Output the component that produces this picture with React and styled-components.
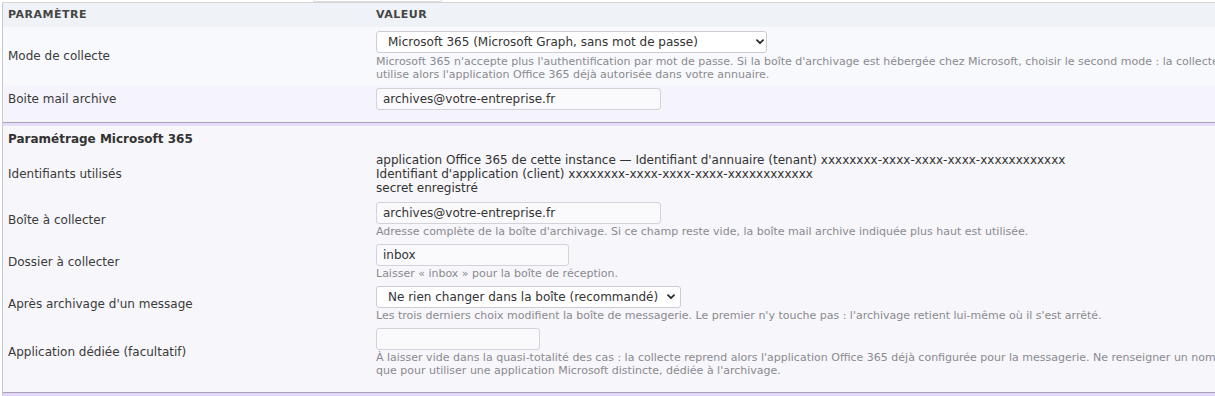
import React from 'react';
import styled, { createGlobalStyle } from 'styled-components';

const Global = createGlobalStyle`
    html, body {
        margin: 0;
        padding: 0;
        background: #ffffff;
        overflow: hidden;
    }
    body {
        font-family: "DejaVu Sans", "Liberation Sans", sans-serif;
        font-size: 12px;
        color: #333333;
    }
`;

const Page = styled.div`
    padding: 0 0 0 2px;
`;

const TabStub = styled.div`
    margin-left: 311px;
    width: 127px;
    height: 1px;
    background: #ffffff;
    border: 1px solid #d9d9de;
    border-top: none;
    border-radius: 0 0 3px 3px;
`;

const Table = styled.div`
    width: 1260px;
    border-top: 1px solid #d3d3d8;
    border-left: 1px solid #c9c9cf;
`;

const Row = styled.div`
    display: grid;
    grid-template-columns: 367px 1fr;
    align-items: center;
    background: ${p => p.$bg || '#f7f6fa'};
`;

const HeadCell = styled.div`
    height: 24px;
    line-height: 24px;
    padding: 0 5px;
    font-size: 11px;
    font-weight: bold;
    letter-spacing: 0.5px;
    text-transform: uppercase;
    color: #454545;
    &:last-child {
        padding-left: 6px;
    }
`;

const Label = styled.div`
    padding: 0 5px;
    line-height: 15px;
    color: #3a3a3a;
`;

const Value = styled.div`
    padding: ${p => p.$pad || '3px 6px 3px'};
    line-height: 14px;
    color: #333333;
`;

const Help = styled.div`
    margin-top: ${p => p.$gap || 1}px;
    font-size: 11px;
    line-height: 13px;
    color: #8a8a90;
`;

const Separator = styled.div`
    padding-top: ${p => p.$gap || 8}px;
    background: ${p => p.$bg || '#f7f6fa'};
    &::after {
        content: '';
        display: block;
        height: 3px;
        border-top: 1px solid #a6a1b6;
        background: ${p => p.$band || '#e6def9'};
    }
`;

const SectionTitle = styled.div`
    padding: 6px 5px 3px;
    line-height: 15px;
    font-weight: bold;
    color: #333333;
    background: #f7f6fa;
`;

const SelectWrap = styled.div`
    position: relative;
    width: ${p => p.$w}px;
    height: 22px;
`;

const Select = styled.select`
    appearance: none;
    -webkit-appearance: none;
    display: block;
    box-sizing: border-box;
    width: 100%;
    height: 22px;
    margin: 0;
    padding: 0 20px 0 11px;
    border: 1px solid #cdccd4;
    border-radius: 3px;
    background: #ffffff;
    font-family: "DejaVu Sans", "Liberation Sans", sans-serif;
    font-size: 12px;
    color: #333333;
    outline: none;
`;

const Chevron = styled.svg`
    position: absolute;
    right: ${p => p.$right || 4}px;
    top: 8px;
    width: 8px;
    height: 6px;
    pointer-events: none;
`;

const Input = styled.input`
    display: block;
    box-sizing: border-box;
    width: ${p => p.$w}px;
    height: 22px;
    margin: 0;
    padding: 0 6px;
    border: 1px solid #d3d2da;
    border-radius: 3px;
    background: #fafafc;
    font-family: "DejaVu Sans", "Liberation Sans", sans-serif;
    font-size: 12px;
    color: #333333;
    outline: none;
`;

function Dropdown({ width, right, value, options }) {
    return (
        <SelectWrap $w={width}>
            <Select defaultValue={value}>
                {options.map(o => <option key={o}>{o}</option>)}
            </Select>
            <Chevron $right={right} viewBox="0 0 8 6">
                <path d="M1 1.2 L4 4.2 L7 1.2" fill="none" stroke="#2b2b2b" strokeWidth="1.8" strokeLinecap="round" strokeLinejoin="round" />
            </Chevron>
        </SelectWrap>
    );
}

export default function App() {
    return (
        <Page>
            <Global />
            <TabStub />
            <Table>
                <Row $bg="#eff2f6">
                    <HeadCell>Paramètre</HeadCell>
                    <HeadCell>Valeur</HeadCell>
                </Row>

                <Row $bg="#f8f9fd">
                    <Label>Mode de collecte</Label>
                    <Value $pad="4px 6px 4px">
                        <Dropdown
                            width={391}
                            right={3}
                            value="Microsoft 365 (Microsoft Graph, sans mot de passe)"
                            options={[
                                'Identifiant et mot de passe (IMAP)',
                                'Microsoft 365 (Microsoft Graph, sans mot de passe)',
                            ]}
                        />
                        <Help $gap={2}>
                            Microsoft 365 n'accepte plus l'authentification par mot de passe. Si la boîte d'archivage est hébergée chez Microsoft, choisir le second mode : la collecte<br />
                            utilise alors l'application Office 365 déjà autorisée dans votre annuaire.
                        </Help>
                    </Value>
                </Row>

                <Row $bg="#f5f3fc">
                    <Label>Boite mail archive</Label>
                    <Value $pad="3px 6px 4px">
                        <Input $w={285} defaultValue="archives@votre-entreprise.fr" />
                    </Value>
                </Row>
                <Separator $bg="#f5f3fc" $gap={8} />

                <SectionTitle>Paramétrage Microsoft 365</SectionTitle>

                <Row>
                    <Label>Identifiants utilisés</Label>
                    <Value $pad="3px 6px 4px">
                        <div>application Office 365 de cette instance — Identifiant d'annuaire (tenant) xxxxxxxx-xxxx-xxxx-xxxx-xxxxxxxxxxxx</div>
                        <div>Identifiant d'application (client) xxxxxxxx-xxxx-xxxx-xxxx-xxxxxxxxxxxx</div>
                        <div>secret enregistré</div>
                    </Value>
                </Row>

                <Row>
                    <Label>Boîte à collecter</Label>
                    <Value>
                        <Input $w={285} defaultValue="archives@votre-entreprise.fr" />
                        <Help>Adresse complète de la boîte d'archivage. Si ce champ reste vide, la boîte mail archive indiquée plus haut est utilisée.</Help>
                    </Value>
                </Row>

                <Row>
                    <Label>Dossier à collecter</Label>
                    <Value>
                        <Input $w={193} defaultValue="inbox" />
                        <Help>Laisser « inbox » pour la boîte de réception.</Help>
                    </Value>
                </Row>

                <Row>
                    <Label>Après archivage d'un message</Label>
                    <Value>
                        <Dropdown
                            width={305}
                            right={6}
                            value="Ne rien changer dans la boîte (recommandé)"
                            options={[
                                'Ne rien changer dans la boîte (recommandé)',
                                'Marquer comme lu',
                                'Déplacer dans un dossier',
                                'Supprimer le message',
                            ]}
                        />
                        <Help>Les trois derniers choix modifient la boîte de messagerie. Le premier n'y touche pas : l'archivage retient lui-même où il s'est arrêté.</Help>
                    </Value>
                </Row>

                <Row>
                    <Label>Application dédiée (facultatif)</Label>
                    <Value>
                        <Input $w={164} defaultValue="" />
                        <Help>
                            À laisser vide dans la quasi-totalité des cas : la collecte reprend alors l'application Office 365 déjà configurée pour la messagerie. Ne renseigner un nom<br />
                            que pour utiliser une application Microsoft distincte, dédiée à l'archivage.
                        </Help>
                    </Value>
                </Row>
                <Separator $gap={12} $band="#e3d6fb" />
            </Table>
        </Page>
    );
}
